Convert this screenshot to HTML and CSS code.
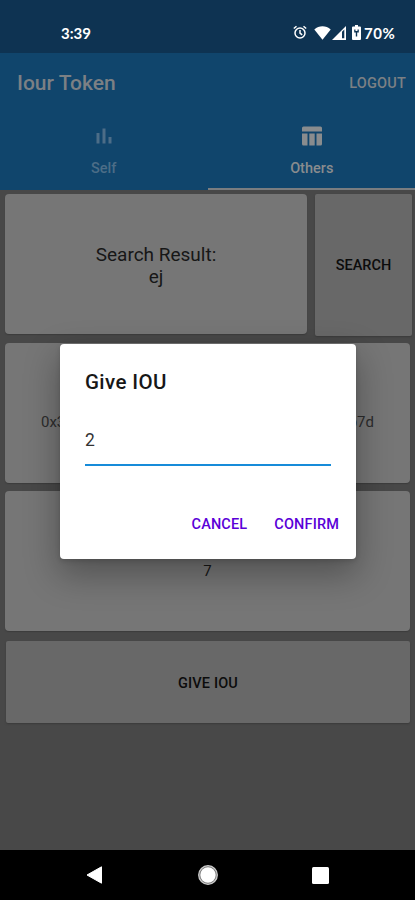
FILE: index.html
```html
<!DOCTYPE html>
<html lang="en">
<head>
<meta charset="utf-8">
<title>Iour Token</title>
<link rel="stylesheet" href="styles.css">
</head>
<body>
<div class="screen">
  <header class="status">
    <span class="time">3:39</span>
    <div class="indicators">
      <svg class="alarm" width="14" height="15" viewBox="0 0 14 15" fill="none" stroke="#fff" stroke-width="1.5"><circle cx="7" cy="8" r="5"/><path d="M7 5v3.2l2.2 1.6M.8 3.5 3.5 1.2M13.2 3.5 10.5 1.2"/></svg>
      <svg class="wifi" width="17" height="14" viewBox="0 0 17 14" fill="#fff"><path d="M.3 3.5C5-.7 12-.7 16.7 3.5L8.5 13.7z"/></svg>
      <svg class="signal" width="14" height="14" viewBox="0 0 14 14"><path d="M14 0v14H0z" fill="#fff"/><path d="M10 5.8 12.3 3.5v8.8H10z" fill="#0e3352"/></svg>
      <svg class="battery" width="9" height="15" viewBox="0 0 9 15"><path d="M3 0h3v1.500h2q1 0 1 1V14q0 1-1 1H1q-1 0-1-1V2.500q0-1 1-1h2z" fill="#fff"/><path d="M2.200 4.500v3h1.600v4h1.400v-4h1.600v-3H5.500v1.600h-2V4.500z" fill="#0e3352"/></svg>
      <span class="percent">70%</span>
    </div>
  </header>
  <div class="appbar">
    <div class="toolbar"><h1 class="title">Iour Token</h1><span class="logout">LOGOUT</span></div>
    <nav class="tabs">
      <div class="tab">
        <svg width="24" height="24" viewBox="0 0 24 24" fill="currentColor"><path d="M4.500 9h3v10.500h-3zM10.500 4.500h3v15h-3zM16.500 13h3v6.500h-3z"/></svg>
        <span>Self</span>
      </div>
      <div class="tab active">
        <svg width="24" height="24" viewBox="0 0 24 24" fill="currentColor"><path d="M3.500 2.500h17q1.500 0 1.500 1.500v3.500H2V4q0-1.500 1.500-1.500zM2 9.500h5.500v12h-4Q2 21.500 2 20zM9.300 9.500h5.400v12H9.300zM16.500 9.500H22V20q0 1.500-1.500 1.500h-4z"/></svg>
        <span>Others</span>
      </div>
    </nav>
  </div>
  <main class="content">
    <div class="row">
      <section class="card result">Search Result:<br>ej</section>
      <div class="button search">SEARCH</div>
    </div>
    <section class="card address"><span>0x3</span><span>b7d</span></section>
    <section class="card amount">7</section>
    <div class="button give">GIVE IOU</div>
  </main>
  <footer class="navbar">
    <svg class="back" width="17" height="18" viewBox="0 0 17 18"><path d="M1 9 15.500.8v16.400z" fill="#fff" stroke="#fff" stroke-linejoin="round"/></svg>
    <svg class="home" width="22" height="22" viewBox="0 0 22 22"><circle cx="11" cy="11" r="9.300" fill="#777" stroke="#ccc" stroke-width="1.300"/><circle cx="11" cy="11" r="7.700" fill="#fff"/></svg>
    <svg class="recent" width="17" height="17" viewBox="0 0 17 17"><rect width="17" height="17" rx="1.500" fill="#fff"/></svg>
  </footer>
  <div class="dialog">
    <h2 class="heading">Give IOU</h2>
    <div class="field">2</div>
    <div class="actions"><span>CANCEL</span><span>CONFIRM</span></div>
  </div>
</div>
</body>
</html>
```
FILE: styles.css
```css
* { box-sizing: border-box; }
body { margin: 0; font-family: Roboto, sans-serif; }
svg { display: block; flex: none; }
.screen { position: relative; width: 415px; height: 900px; display: flex; flex-direction: column; overflow: hidden; background: #484848; }
.status { height: 53px; flex: none; padding: 12px 19px 0 61px; display: flex; justify-content: space-between; align-items: center; background: #0e3352; color: #fff; font: 700 15px/20px Lato, sans-serif; }
.time { font-size: 15px; }
.indicators { display: flex; align-items: center; }
.wifi { margin-left: 7px; }
.signal { margin-left: 1px; }
.battery { margin-left: 6px; }
.percent { margin-left: 3px; width: 32px; letter-spacing: .5px; }
.appbar { height: 137px; flex: none; background: #10456c; color: #7c8084; }
.toolbar { height: 60px; padding: 0 9px 0 17px; display: flex; align-items: center; justify-content: space-between; }
.title { margin: 0; font-size: 21px; font-weight: 500; line-height: 26px; }
.logout { font-size: 14.500px; font-weight: 500; letter-spacing: .2px; }
.tabs { height: 77px; display: grid; grid-template-columns: 1fr 1fr; }
.tab { display: flex; flex-direction: column; align-items: center; padding-top: 11px; gap: 11px; font-size: 14.500px; font-weight: 500; line-height: 20px; color: #4c6d87; border-bottom: 2px solid transparent; }
.tab.active { color: #898c8e; border-bottom-color: #7a7d80; padding-left: 1px; }
.content { flex: 1; padding: 4px 5px 0 5px; }
.row { display: flex; gap: 8px; height: 142px; margin-right: -2px; }
.card { display: flex; align-items: center; justify-content: center; height: 140px; border-radius: 4px; background: #767676; color: #171717; box-shadow: 0 1px 1px #3c3c3c; margin-bottom: 8px; }
.result { width: 302px; padding-top: 3px; text-align: center; font-size: 19px; line-height: 22px; }
.button { display: flex; align-items: center; justify-content: center; background: #686868; color: #0c0c0c; font-size: 14.500px; font-weight: 500; border-radius: 2px; box-shadow: 0 1px 2px #3a3a3a; }
.search { width: 97px; height: 142px; }
.row + .card { margin-top: 7px; }
.address { justify-content: space-between; padding: 18px 36px 0; color: #2c2c2c; font-size: 15px; }
.amount { padding-top: 19px; font-size: 15px; }
.give { height: 82px; margin: 10px 0 0 1px; padding-top: 2px; letter-spacing: .15px; }
.navbar { height: 50px; flex: none; display: flex; align-items: center; justify-content: space-between; padding: 0 86px; background: #000; }
.dialog { position: absolute; left: 60px; top: 344px; width: 296px; height: 215px; padding: 25px 17px 0 25px; border-radius: 4px; background: #fff; box-shadow: 0 14px 34px 2px rgba(0,0,0,.3), 0 2px 5px rgba(0,0,0,.15); }
.heading { margin: 0; font-size: 20.500px; line-height: 26px; font-weight: 500; letter-spacing: .4px; color: #171717; }
.field { width: 246px; height: 42px; margin-top: 29px; padding-top: 6px; border-bottom: 2px solid #168bd9; color: #333; font-size: 17.500px; line-height: 20px; }
.actions { display: flex; justify-content: flex-end; gap: 27px; margin-top: 49px; font-size: 14.500px; line-height: 20px; font-weight: 500; color: #5a00d8; letter-spacing: .15px; }
```
